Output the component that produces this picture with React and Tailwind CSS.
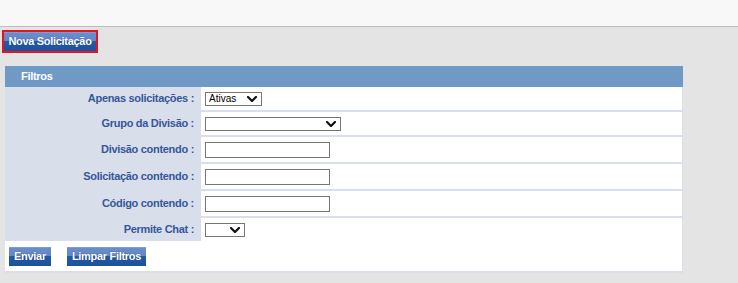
import React from 'react';

const font = { fontFamily: '"Liberation Sans", Arial, sans-serif' };

function BlueButton({ children, className = '' }) {
  return (
    <button
      type="button"
      className={`h-[19px] flex items-center justify-center text-white font-bold text-[11px] tracking-[-0.3px] leading-none bg-[linear-gradient(to_bottom,#86a3da_0%,#6a8ccc_8%,#6585c6_50%,#2359a6_50%,#1d519c_100%)] [text-shadow:0_0_1px_#1b3f80] ${className}`}
    >
      {children}
    </button>
  );
}

function Chevron({ className = '' }) {
  return (
    <svg width="10" height="6" viewBox="0 0 10 6" className={className}>
      <path d="M1 1 L5 5 L9 1" fill="none" stroke="#111" strokeWidth="2.2" strokeLinecap="square" />
    </svg>
  );
}

function FakeSelect({ width, value }) {
  return (
    <div className="relative flex h-[14px]" style={{ width }}>
      <select
        defaultValue={value}
        className="appearance-none block w-full h-[14px] border border-[#767676] bg-white text-[10px] leading-none text-black pl-[3px] outline-none rounded-none"
        style={font}
      >
        <option value={value}>{value}</option>
      </select>
      <Chevron className="absolute right-[5px] top-[4px] pointer-events-none" />
    </div>
  );
}

function Row({ label, children, height }) {
  return (
    <div className="flex" style={{ height }}>
      <div className="w-[195px] shrink-0 flex items-center justify-end pr-[6px] text-[11px] font-bold tracking-[-0.3px] text-[#36569b]">
        {label}
      </div>
      <div className="ml-[1px] flex-1 bg-white flex items-center pl-[4px]">{children}</div>
    </div>
  );
}

function TextInput() {
  return <input type="text" className="block w-[125px] h-[16px] border border-[#767676] bg-white outline-none" />;
}

export default function App() {
  return (
    <div className="w-[738px] h-[283px] bg-[#e4e4e4] overflow-hidden" style={font}>
      <div className="h-[27px] bg-[#f8f8f8] border-b border-[#bdbdbd]" />

      <div className="ml-[2px] mt-[3px] w-[96px] border-2 border-[#e3161d]">
        <BlueButton className="w-full">Nova Solicitação</BlueButton>
      </div>

      <div className="ml-[5px] mt-[13px] w-[678px] bg-[#d9dfea]">
        <div className="h-[21px] bg-[#6f9ac6] flex items-center pl-[16px] text-white font-bold text-[11px] tracking-[-0.3px]">
          Filtros
        </div>
        <div className="pr-[1px] pb-[2px] flex flex-col">
          <div className="flex flex-col gap-[2px]">
            <Row label="Apenas solicitações :" height={23}>
              <FakeSelect width={57} value="Ativas" />
            </Row>
            <Row label="Grupo da Divisão :" height={23}>
              <FakeSelect width={136} value="" />
            </Row>
            <Row label="Divisão contendo :" height={25}>
              <TextInput />
            </Row>
            <Row label="Solicitação contendo :" height={25}>
              <TextInput />
            </Row>
            <Row label="Código contendo :" height={25}>
              <TextInput />
            </Row>
            <Row label="Permite Chat :" height={23}>
              <FakeSelect width={40} value="" />
            </Row>
          </div>
          <div className="h-[30px] bg-white flex items-center pl-[4px] gap-[16px]">
            <BlueButton className="w-[42px]">Enviar</BlueButton>
            <BlueButton className="w-[79px]">Limpar Filtros</BlueButton>
          </div>
        </div>
      </div>
    </div>
  );
}
